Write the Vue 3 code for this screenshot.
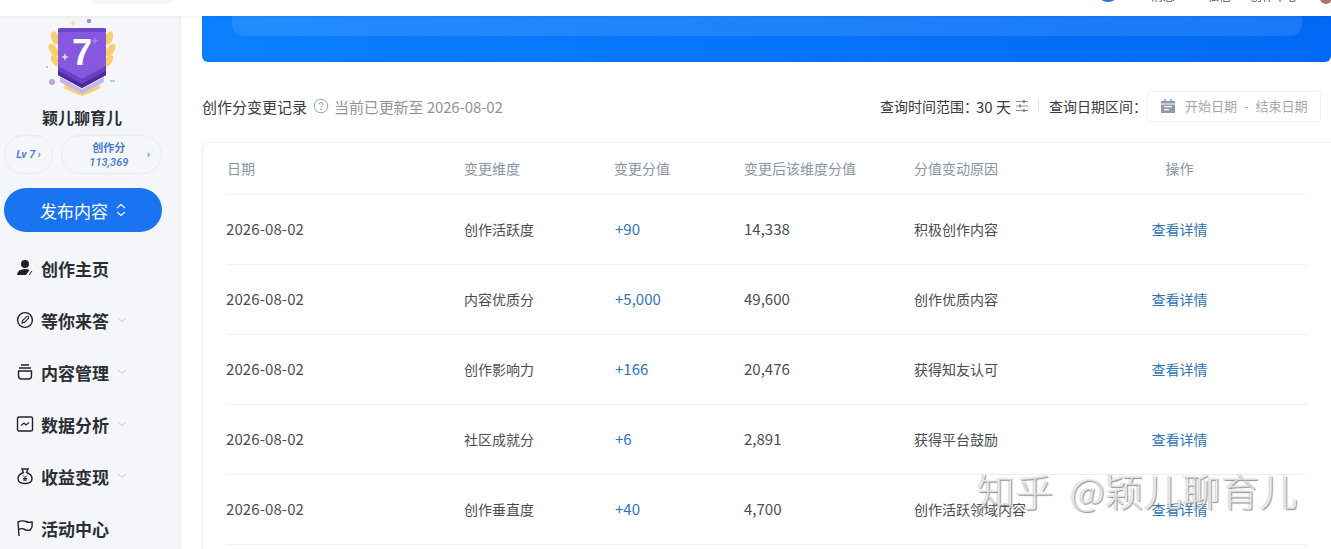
<template>
  <div class="page">
    <header class="topbar">
      <div class="search"></div>
      <div class="top-right">
        <span class="top-dot"></span>
        <span class="top-word w1">消息</span>
        <span class="top-word w2">私信</span>
        <span class="top-word w3">创作中心</span>
        <span class="top-avatar"></span>
      </div>
    </header>
    <div class="body">
      <aside class="sidebar">
        <svg class="medal" width="82" height="84" viewBox="0 0 82 84">
          <g fill="#f7cf6e">
            <ellipse cx="14" cy="21" rx="3.8" ry="7" transform="rotate(-20 14 21)" />
            <ellipse cx="12.5" cy="33" rx="3.8" ry="7" transform="rotate(-35 12.5 33)" />
            <ellipse cx="15" cy="44" rx="3.8" ry="7" transform="rotate(-40 15 44)" />
            <ellipse cx="68" cy="21" rx="3.8" ry="7" transform="rotate(20 68 21)" />
            <ellipse cx="69.5" cy="33" rx="3.8" ry="7" transform="rotate(35 69.5 33)" />
            <ellipse cx="67" cy="44" rx="3.8" ry="7" transform="rotate(40 67 44)" />
          </g>
          <path d="M26 66 L41 74 L56 66 L60 71 Q50 76 41 79 Q32 76 22 71Z" fill="#f9d27a" />
          <path d="M19 60 L41 72 L63 60 L63 65 L41 77 L19 65Z" fill="#c8b4ee" />
          <path d="M17 13 Q17 11 19 11 H63 Q65 11 65 13 V58 L41 71 L17 58Z" fill="#8558dd" />
          <path d="M17 13 Q17 11 19 11 H63 Q65 11 65 13 V15 H17Z" fill="#6f44c9" />
          <path d="M17 49 L41 62 L65 49 V58 L41 71 L17 58Z" fill="#6a3fc4" />
          <path d="M17 54 L41 67 L65 54 V58 L41 71 L17 58Z" fill="#4a2a9c" />
          <text x="41" y="48" class="medal-num" text-anchor="middle">7</text>
          <path d="M32 0 L33 3 L36 4 L33 5 L32 8 L31 5 L28 4 L31 3Z" transform="translate(0 2)" fill="#f3dfae" />
          <circle cx="48" cy="4" r="2.2" fill="#a58ad8" />
          <circle cx="11" cy="65" r="3" fill="#b7a3e0" />
          <circle cx="6" cy="50" r="1" fill="#b7a3e0" />
          <path d="M24 36 L25 39 L28 40 L25 41 L24 44 L23 41 L20 40 L23 39Z" fill="#ead9fb" />
          <path d="M54 20 L55 23 L58 24 L55 25 L54 28 L53 25 L50 24 L53 23Z" fill="#a684e6" />
          <path d="M69 64 h5" stroke="#a9cdf0" stroke-width="2" />
        </svg>
        <div class="name">颖儿聊育儿</div>
        <div class="pills">
          <div class="pill lv">Lv 7 <span class="arr">›</span></div>
          <div class="pill score">
            <div class="score-text"><div>创作分</div><div class="num">113,369</div></div>
            <span class="arr">›</span>
          </div>
        </div>
        <div class="publish">
          发布内容
          <svg width="12" height="14" viewBox="0 0 12 14" fill="none" stroke="#fff" stroke-width="1.1">
            <path d="M2 5 L6 1.5 L10 5" /><path d="M2 9 L6 12.5 L10 9" />
          </svg>
        </div>
        <nav class="nav">
          <div v-for="item in menu" :key="item.label" class="nav-item">
            <svg class="nav-icon" width="18" height="18" viewBox="0 0 18 18" fill="none" stroke="#1f2329" stroke-width="1.4" v-html="item.icon"></svg>
            <span class="nav-label">{{ item.label }}</span>
            <svg v-if="item.more" class="chev" width="10" height="6" viewBox="0 0 10 6" fill="none" stroke="#c6c9d0" stroke-width="1">
              <path d="M1 1 L5 4.5 L9 1" />
            </svg>
          </div>
        </nav>
      </aside>
      <main class="main">
        <div class="banner"><div class="banner-inner"></div></div>
        <div class="toolbar">
          <div class="tb-left">
            <span class="tb-title">创作分变更记录</span>
            <svg width="16" height="16" viewBox="0 0 16 16" fill="none" stroke="#9aa0a8" stroke-width="1">
              <circle cx="8" cy="8" r="6.8" />
              <path d="M6 6.3 Q6 4.5 8 4.5 Q10 4.5 10 6.2 Q10 7.3 8.8 7.9 Q8 8.3 8 9.5" />
              <circle cx="8" cy="11.4" r=".5" fill="#9aa0a8" />
            </svg>
            <span class="tb-note">当前已更新至 2026-08-02</span>
          </div>
          <div class="tb-right">
            <span>查询时间范围：</span>
            <span class="range">30 天</span>
            <svg class="filter" width="12" height="14" viewBox="0 0 12 14" fill="none" stroke="#8a9099" stroke-width="1">
              <path d="M0 2.5 H12 M0 7 H12 M0 11.5 H12" />
              <path d="M8 1 V4 M4 5.5 V8.5 M8 10 V13" stroke-width="2" />
            </svg>
            <span class="vline"></span>
            <span>查询日期区间：</span>
            <div class="date-box">
              <svg width="14" height="14" viewBox="0 0 14 14">
                <path d="M0 2 H14 V14 H0Z" fill="#8f99a8" />
                <path d="M3 0 H4.6 V3 H3Z M9.4 0 H11 V3 H9.4Z" fill="#8f99a8" />
                <path d="M0 4.6 H14 V5.4 H0Z M3 7 H11 V8.2 H3Z M3 10 H8 V11.2 H3Z" fill="#fff" />
              </svg>
              <span class="date-text">开始日期</span>
              <span class="date-text dash">-</span>
              <span class="date-text">结束日期</span>
            </div>
          </div>
        </div>
        <section class="card">
          <div class="row head">
            <span>日期</span><span>变更维度</span><span>变更分值</span><span>变更后该维度分值</span><span>分值变动原因</span><span class="act">操作</span>
          </div>
          <div v-for="r in rows" :key="r.dim" class="row item">
            <span class="num-cell date">{{ r.date }}</span>
            <span>{{ r.dim }}</span>
            <span class="num-cell delta">{{ r.delta }}</span>
            <span class="num-cell">{{ r.total }}</span>
            <span>{{ r.reason }}</span>
            <span class="act link">查看详情</span>
          </div>
        </section>
        <div class="watermark">知乎 @颖儿聊育儿</div>
      </main>
    </div>
  </div>
</template>

<script setup>
const menu = [
  { label: '创作主页', more: false, icon: '<circle cx="9" cy="5" r="4" fill="#1f2329" stroke="none"/><path d="M1 16 Q1.5 10 9 10 Q12 10 13.5 11 L10 16Z" fill="#1f2329" stroke="none"/><path d="M13 16 L16 12" stroke-width="1"/>' },
  { label: '等你来答', more: true, icon: '<circle cx="9" cy="9" r="7.4"/><path d="M6 12 L6.6 9.6 L10.6 5.6 Q11.6 4.9 12.4 5.6 Q13 6.4 12.4 7.4 L8.4 11.4Z" stroke-width="1.1"/>' },
  { label: '内容管理', more: true, icon: '<path d="M5 2 H13 M3 5 H15" /><path d="M2.5 8 H15.5 V13 Q15.5 16 12.5 16 H5.5 Q2.5 16 2.5 13Z"/>' },
  { label: '数据分析', more: true, icon: '<rect x="1.5" y="2" width="15" height="14" rx="1.5"/><path d="M5 10.5 L8 8 L10 10 L13 7.5" stroke-width="1.1"/>' },
  { label: '收益变现', more: true, icon: '<path d="M6 2 H12 L10.6 5.5 Q16 7.5 16 11.5 Q16 16.5 9 16.5 Q2 16.5 2 11.5 Q2 7.5 7.4 5.5Z"/><path d="M7 8.5 L9 10.5 L11 8.5 M9 10.5 V14 M7 11.5 H11 M7 13 H11" stroke-width="1"/>' },
  { label: '活动中心', more: false, icon: '<path d="M3 17 L2 3 Q6 1 10 2.5 Q13 4 16 3 Q17 8 14 11 Q10 12 8 10 Q5 9 3 10.5" />' },
]

const rows = [
  { date: '2026-08-02', dim: '创作活跃度', delta: '+90', total: '14,338', reason: '积极创作内容' },
  { date: '2026-08-02', dim: '内容优质分', delta: '+5,000', total: '49,600', reason: '创作优质内容' },
  { date: '2026-08-02', dim: '创作影响力', delta: '+166', total: '20,476', reason: '获得知友认可' },
  { date: '2026-08-02', dim: '社区成就分', delta: '+6', total: '2,891', reason: '获得平台鼓励' },
  { date: '2026-08-02', dim: '创作垂直度', delta: '+40', total: '4,700', reason: '创作活跃领域内容' },
]
</script>

<style>
html, body { margin: 0; overflow: hidden; background: #fff; }
</style>

<style scoped>
.page {
  width: 1331px;
  height: 549px;
  overflow: hidden;
  display: flex;
  flex-direction: column;
  font-family: "Noto Sans CJK SC", "Noto Sans", sans-serif;
  color: #373a40;
}
.topbar {
  position: relative;
  z-index: 2;
  height: 16px;
  flex: none;
  background: #fff;
  box-shadow: 0 1px 3px rgba(0, 0, 0, 0.06);
  overflow: hidden;
}
.search {
  position: absolute;
  left: 88px;
  top: -20px;
  width: 90px;
  height: 24px;
  border-radius: 12px;
  background: #f6f6f6;
}
.top-dot {
  position: absolute;
  left: 1096px;
  top: -22px;
  width: 24px;
  height: 24px;
  border-radius: 50%;
  background: #2a6fe0;
}
.top-word {
  position: absolute;
  top: -12px;
  font-size: 12px;
  line-height: 16px;
  color: #555;
}
.w1 { left: 1151px; }
.w2 { left: 1207px; }
.w3 { left: 1250px; }
.top-avatar {
  position: absolute;
  left: 1320px;
  top: -8px;
  width: 12px;
  height: 12px;
  border-radius: 50%;
  background: #a9766a;
}
.body {
  flex: 1;
  display: flex;
  min-height: 0;
}
.sidebar {
  width: 181px;
  flex: none;
  box-sizing: border-box;
  background: #f5f6fa;
  border-right: 1px solid #eef0f3;
  display: flex;
  flex-direction: column;
  align-items: center;
}
.sidebar > * { flex: none; }
.medal { display: block; margin: 1px 0 0 -16px; }
.medal-num {
  font-family: "Liberation Sans", sans-serif;
  font-size: 36px;
  font-weight: 700;
  fill: #fff;
}
.name {
  margin: 4px 0 0 -16px;
  font-size: 16px;
  line-height: 24px;
  font-weight: 700;
  color: #2b2e33;
}
.pills {
  display: flex;
  gap: 8px;
  margin: 6px 0 0 -14px;
}
.pill {
  box-sizing: border-box;
  height: 39px;
  border: 1px solid #e8eaee;
  border-radius: 20px;
  display: flex;
  align-items: center;
  color: #4a7fd0;
  font-family: Roboto, "Noto Sans CJK SC", sans-serif;
  font-weight: 600;
}
.lv {
  width: 49px;
  justify-content: center;
  font-size: 11px;
  font-style: italic;
}
.arr { margin-left: 2px; font-style: normal; font-size: 11px; }
.score {
  width: 101px;
  padding: 0 11px 0 0;
}
.score-text {
  flex: 1;
  text-align: center;
  font-size: 11px;
  line-height: 14px;
  margin-left: 11px;
  padding-top: 3px;
}
.num { font-style: italic; }
.publish {
  margin: 14px 0 0 -14px;
  padding-left: 1px;
  box-sizing: border-box;
  width: 158px;
  height: 44px;
  border-radius: 22px;
  background: #1a73f0;
  color: #fff;
  font-size: 17px;
  display: flex;
  align-items: center;
  justify-content: center;
  gap: 7px;
}
.nav {
  align-self: stretch;
  padding: 10px 0 0 16px;
  display: flex;
  flex-direction: column;
}
.nav-item {
  height: 52px;
  flex: none;
  display: flex;
  align-items: center;
}
.nav-icon { flex: none; }
.nav-label {
  margin-left: 7px;
  font-size: 17px;
  font-weight: 700;
  color: #2b2e33;
}
.chev { margin-left: 8px; }
.main {
  position: relative;
  flex: 1;
  min-width: 0;
  padding-left: 21px;
}
.banner {
  height: 46px;
  background: linear-gradient(90deg, #0a80ff, #0069f5);
  border-radius: 0 0 6px 6px;
  padding: 0 29px 0 30px;
}
.banner-inner {
  height: 20px;
  background: rgba(255, 255, 255, 0.1);
  border-radius: 0 0 12px 12px;
}
.toolbar {
  box-sizing: border-box;
  height: 32px;
  margin-top: 29px;
  padding: 0 10px 2px 0;
  display: flex;
  align-items: center;
  justify-content: space-between;
  font-size: 14px;
  color: #373a40;
}
.tb-left, .tb-right { display: flex; align-items: center; }
.tb-title { font-size: 15px; }
.tb-left svg { margin: 0 5px 0 6px; }
.tb-note { color: #8f949c; font-size: 15px; letter-spacing: -0.1px; }
.range { font-size: 15px; margin-left: -2px; }
.filter { margin-left: 5px; }
.vline {
  width: 1px;
  height: 12px;
  background: #dfe2e6;
  margin: 0 10px;
}
.date-box {
  box-sizing: border-box;
  width: 174px;
  height: 31px;
  margin-bottom: -1px;
  border: 1px solid #eef0f3;
  border-radius: 2px;
  display: flex;
  align-items: center;
  padding: 0 0 2px 13px;
  font-size: 13px;
}
.date-text { color: #a2a7af; }
.date-box svg { margin-right: 10px; }
.dash { margin: 0 7px; }
.card {
  margin-top: 19px;
  height: 420px;
  border: 1px solid #eceef1;
  border-right: 0;
  border-radius: 6px 0 0 0;
  padding-left: 24px;
}
.row {
  width: 1080px;
  display: grid;
  grid-template-columns: 237px 150px 130px 170px 140px 253px;
  align-items: center;
  font-size: 14px;
  border-bottom: 1px solid #eceef1;
  box-sizing: border-box;
  padding-bottom: 2px;
}
.head {
  height: 52px;
  color: #8a94a3;
}
.item {
  height: 70px;
  color: #4a4d52;
}
.num-cell { font-size: 15px; }
.date { margin-left: -1px; letter-spacing: 0.1px; }
.delta { color: #2f74b5; padding-left: 1px; }
.act { text-align: center; padding-right: 2px; }
.link { color: #2f74b5; }
.watermark {
  position: absolute;
  left: 796px;
  top: 449px;
  font-size: 38px;
  line-height: 50px;
  letter-spacing: 0.6px;
  word-spacing: 7px;
  font-weight: 300;
  white-space: nowrap;
  color: rgba(255, 255, 255, 0.65);
  text-shadow: 1px 1px 1px rgba(120, 120, 120, 0.8), -1px 0 1px rgba(170, 170, 170, 0.5);
}
</style>
